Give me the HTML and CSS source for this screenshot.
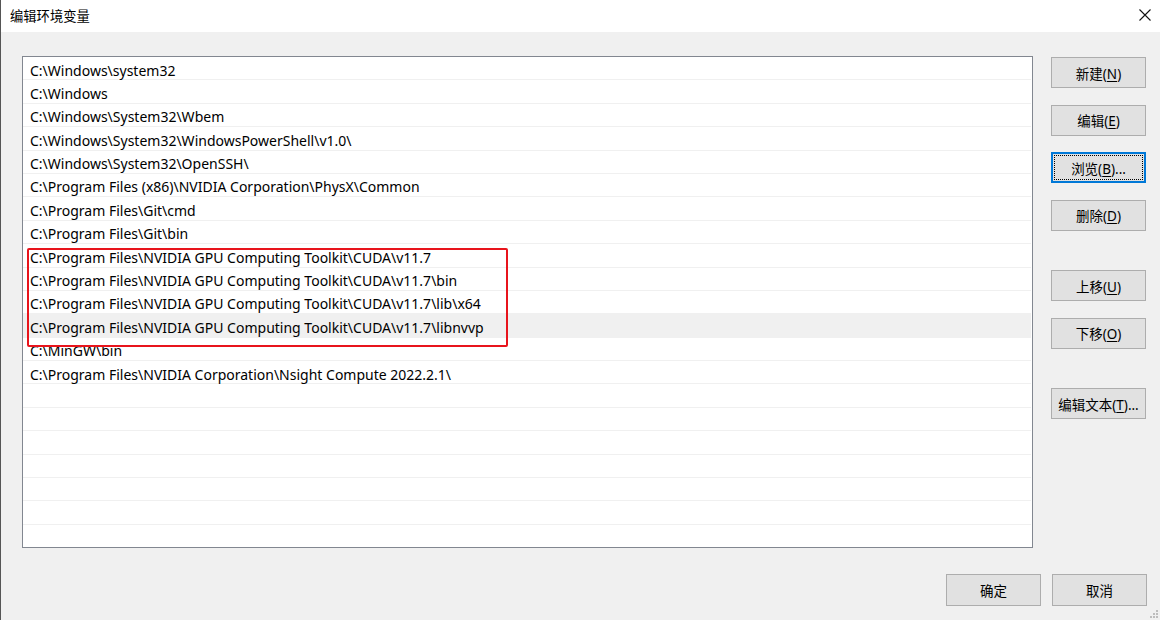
FILE: index.html
```html
<!DOCTYPE html>
<html lang="zh-CN">
<head>
<meta charset="utf-8">
<title>编辑环境变量</title>
<link rel="stylesheet" href="styles.css">
</head>
<body>
<div class="window">
  <div class="titlebar">
    <span class="title">编辑环境变量</span>
    <svg class="close" width="12" height="12" viewBox="0 0 12 12"><path d="M0.5 0.5 L11.5 11.5 M11.5 0.5 L0.5 11.5" stroke="#111" stroke-width="1.1" fill="none"/></svg>
  </div>
  <div class="content">
    <div class="list">
      <div class="row">C:\Windows\system32</div>
      <div class="row">C:\Windows</div>
      <div class="row">C:\Windows\System32\Wbem</div>
      <div class="row">C:\Windows\System32\WindowsPowerShell\v1.0\</div>
      <div class="row">C:\Windows\System32\OpenSSH\</div>
      <div class="row">C:\Program Files (x86)\NVIDIA Corporation\PhysX\Common</div>
      <div class="row">C:\Program Files\Git\cmd</div>
      <div class="row">C:\Program Files\Git\bin</div>
      <div class="row">C:\Program Files\NVIDIA GPU Computing Toolkit\CUDA\v11.7</div>
      <div class="row">C:\Program Files\NVIDIA GPU Computing Toolkit\CUDA\v11.7\bin</div>
      <div class="row">C:\Program Files\NVIDIA GPU Computing Toolkit\CUDA\v11.7\lib\x64</div>
      <div class="row hover">C:\Program Files\NVIDIA GPU Computing Toolkit\CUDA\v11.7\libnvvp</div>
      <div class="row">C:\MinGW\bin</div>
      <div class="row">C:\Program Files\NVIDIA Corporation\Nsight Compute 2022.2.1\</div>
      <div class="row"></div>
      <div class="row"></div>
      <div class="row"></div>
      <div class="row"></div>
      <div class="row"></div>
      <div class="row"></div>
      <div class="mark"></div>
    </div>
    <div class="side">
      <button class="btn">新建(<u>N</u>)</button>
      <button class="btn">编辑(<u>E</u>)</button>
      <button class="btn focus">浏览(<u>B</u>)...</button>
      <button class="btn">删除(<u>D</u>)</button>
      <button class="btn sep">上移(<u>U</u>)</button>
      <button class="btn">下移(<u>O</u>)</button>
      <button class="btn sep">编辑文本(<u>T</u>)...</button>
    </div>
  </div>
  <div class="footer">
    <button class="btn">确定</button>
    <button class="btn">取消</button>
  </div>
  <svg class="grip" width="8" height="8" viewBox="0 0 8 8">
    <rect x="6" y="0" width="2" height="2" fill="#bdbdbd"/>
    <rect x="3" y="3" width="2" height="2" fill="#bdbdbd"/>
    <rect x="6" y="3" width="2" height="2" fill="#bdbdbd"/>
    <rect x="0" y="6" width="2" height="2" fill="#bdbdbd"/>
    <rect x="3" y="6" width="2" height="2" fill="#bdbdbd"/>
    <rect x="6" y="6" width="2" height="2" fill="#bdbdbd"/>
  </svg>
</div>
</body>
</html>
```
FILE: styles.css
```css
html, body {
  margin: 0;
  padding: 0;
}
body {
  width: 1160px;
  height: 620px;
  overflow: hidden;
  font-family: "Noto Sans", "Noto Sans CJK SC", sans-serif;
  color: #000;
}
.window {
  position: relative;
  box-sizing: border-box;
  width: 1160px;
  height: 620px;
  background: #f0f0f0;
  border-left: 1px solid #555;
}
.titlebar {
  height: 32px;
  background: #fff;
  display: flex;
  align-items: center;
  justify-content: space-between;
  padding: 0 9px 0 9px;
}
.title {
  font-family: "Noto Sans CJK SC", sans-serif;
  font-size: 13.3px;
  margin-top: -2px;
}
.close {
  margin-top: -3px;
}
.content {
  display: flex;
  padding: 24px 0 0 21px;
  gap: 18px;
}
.list {
  position: relative;
  box-sizing: border-box;
  width: 1011px;
  height: 492px;
  background: #fff;
  border: 1px solid #828790;
  padding: 0 1px 0 0;
  overflow: hidden;
}
.row {
  box-sizing: border-box;
  height: 23.4px;
  border-bottom: 1px solid #f0f0f0;
  padding: 3.5px 0 0 7px;
  font-size: 14px;
  line-height: 19px;
  white-space: nowrap;
}
.row.hover {
  background: #f0f0f0;
}
.mark {
  position: absolute;
  left: 4px;
  top: 191px;
  width: 481px;
  height: 99px;
  box-sizing: border-box;
  border: 2px solid #e8141c;
  border-radius: 2px;
}
.side {
  display: flex;
  flex-direction: column;
  gap: 16.5px;
  padding-top: 1px;
}
.btn {
  box-sizing: border-box;
  width: 95px;
  height: 31px;
  background: #e1e1e1;
  border: 1px solid #adadad;
  border-radius: 0;
  padding: 0;
  font-family: "Noto Sans", "Noto Sans CJK SC", sans-serif;
  font-size: 13.5px;
  color: #000;
}
.btn u {
  text-decoration-thickness: 1px;
  text-underline-offset: 2px;
}
.btn.focus {
  border-color: #0078d7;
  box-shadow: inset 0 0 0 1px #0078d7;
  outline: 1px dotted #000;
  outline-offset: -4px;
}
.btn.sep {
  margin-top: 23px;
}
.footer {
  display: flex;
  justify-content: flex-end;
  gap: 11px;
  padding: 26px 13px 0 0;
}
.footer .btn {
  height: 32px;
}
.grip {
  position: absolute;
  right: 2px;
  bottom: 2px;
}
```
